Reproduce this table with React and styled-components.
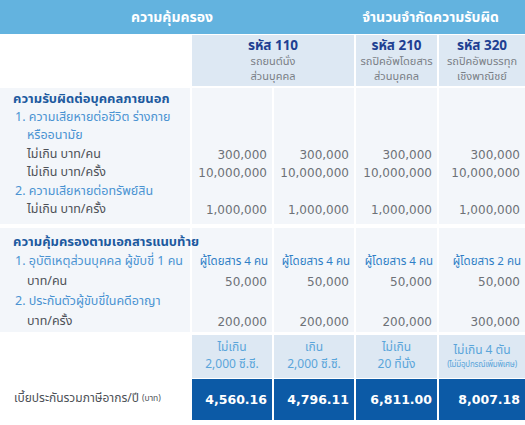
import React from 'react'
import styled, { createGlobalStyle } from 'styled-components'

const GlobalStyle = createGlobalStyle`
  html, body {
    margin: 0;
    padding: 0;
    background: #ffffff;
  }
  body {
    font-family: "Noto Sans Thai", "Tahoma", "DejaVu Sans", "Noto Sans", sans-serif;
  }
`

const Table = styled.div`
  width: 525px;
  display: grid;
  grid-template-columns: 190px 80px 80px 81px 86px;
  column-gap: 2px;
  background: #ffffff;
`

const TopBar = styled.div`
  grid-column: 1 / -1;
  height: 34px;
  background: #63b3df;
  display: flex;
  margin-bottom: 1px;
`

const TopTitle = styled.div`
  width: ${(p) => p.w}px;
  color: #ffffff;
  font-weight: 700;
  font-size: 14px;
  display: flex;
  align-items: center;
  justify-content: center;
  padding-right: ${(p) => p.shift || 0}px;
  box-sizing: border-box;
`

const CodeCell = styled.div`
  grid-column: ${(p) => p.span || 'auto'};
  background: ${(p) => (p.blank ? '#ffffff' : '#dde8f3')};
  height: 51px;
  display: flex;
  flex-direction: column;
  align-items: center;
  padding-top: 3px;
  box-sizing: border-box;
  margin-bottom: 2px;
`

const Code = styled.div`
  color: #203f92;
  font-weight: 700;
  font-size: 13.5px;
  line-height: 16px;
`

const CodeSub = styled.div`
  color: #7a7f86;
  font-size: 11px;
  line-height: 15px;
  white-space: nowrap;
`

const Section = styled.div`
  background: #f3f6fa;
  padding: ${(p) => p.pad};
  margin-bottom: ${(p) => p.gapAfter}px;
  box-sizing: border-box;
  position: relative;
  z-index: ${(p) => (p.left ? 1 : 0)};
`

const Line = styled.div`
  height: ${(p) => p.h}px;
  line-height: ${(p) => p.h}px;
  white-space: nowrap;
  font-size: 12.5px;
`

const Title = styled(Line)`
  padding-left: 13px;
  color: #1d5a9f;
  font-weight: 700;
  font-size: 13px;
`

const Item = styled(Line)`
  padding-left: ${(p) => (p.cont ? 27 : 15)}px;
  color: #4a93d2;
`

const Label = styled(Line)`
  padding-left: 27px;
  color: #4d5157;
`

const Value = styled(Line)`
  text-align: right;
  padding-right: 5px;
  color: #6d7177;
  font-family: "DejaVu Sans", sans-serif;
  font-size: 12px;
`

const Passenger = styled(Line)`
  text-align: right;
  padding-right: 4px;
  color: #2f7fc6;
  font-size: 11.5px;
`

const SubHead = styled.div`
  background: #dde8f3;
  height: 43px;
  display: flex;
  flex-direction: column;
  align-items: center;
  justify-content: center;
  color: #5aa5da;
  font-size: 12px;
  line-height: 17px;
  margin-top: 3px;
  white-space: nowrap;
`

const Tiny = styled.div`
  font-size: 8px;
  line-height: 12px;
  letter-spacing: -0.2px;
`

const BlankCell = styled.div`
  background: #ffffff;
`

const TotalLabel = styled.div`
  height: 41px;
  display: flex;
  align-items: center;
  padding-left: 14px;
  color: #4d5157;
  font-size: 12px;
  white-space: nowrap;
  small {
    font-size: 8.5px;
    margin-left: 3px;
  }
`

const Total = styled.div`
  background: #0c5aa6;
  height: 41px;
  margin-top: 1px;
  display: flex;
  align-items: center;
  justify-content: flex-end;
  padding-right: 5px;
  color: #ffffff;
  font-family: "DejaVu Sans", sans-serif;
  font-weight: 700;
  font-size: 12.5px;
`

const s1Rows = [
  { kind: 'title', text: 'ความรับผิดต่อบุคคลภายนอก' },
  { kind: 'item', text: '1. ความเสียหายต่อชีวิต ร่างกาย' },
  { kind: 'item', cont: true, text: 'หรืออนามัย' },
  { kind: 'label', text: 'ไม่เกิน บาท/คน', v: ['300,000', '300,000', '300,000', '300,000'] },
  { kind: 'label', text: 'ไม่เกิน บาท/ครั้ง', v: ['10,000,000', '10,000,000', '10,000,000', '10,000,000'] },
  { kind: 'item', text: '2. ความเสียหายต่อทรัพย์สิน' },
  { kind: 'label', text: 'ไม่เกิน บาท/ครั้ง', v: ['1,000,000', '1,000,000', '1,000,000', '1,000,000'] },
]

const s2Rows = [
  { kind: 'title', text: 'ความคุ้มครองตามเอกสารแนบท้าย' },
  { kind: 'item', text: '1. อุบัติเหตุส่วนบุคคล ผู้ขับขี่ 1 คน', p: ['ผู้โดยสาร 4 คน', 'ผู้โดยสาร 4 คน', 'ผู้โดยสาร 4 คน', 'ผู้โดยสาร 2 คน'] },
  { kind: 'label', text: 'บาท/คน', v: ['50,000', '50,000', '50,000', '50,000'] },
  { kind: 'item', text: '2. ประกันตัวผู้ขับขี่ในคดีอาญา' },
  { kind: 'label', text: 'บาท/ครั้ง', v: ['200,000', '200,000', '200,000', '300,000'] },
]

const LeftLine = ({ row, h }) => {
  if (row.kind === 'title') return <Title h={h}>{row.text}</Title>
  if (row.kind === 'item') return <Item h={h} cont={row.cont}>{row.text}</Item>
  return <Label h={h}>{row.text}</Label>
}

const Block = ({ rows, h, pad, gapAfter }) => (
  <>
    <Section left pad={pad} gapAfter={gapAfter}>
      {rows.map((r, i) => (
        <LeftLine key={i} row={r} h={h} />
      ))}
    </Section>
    {[0, 1, 2, 3].map((c) => (
      <Section key={c} pad={pad} gapAfter={gapAfter}>
        {rows.map((r, i) =>
          r.p ? (
            <Passenger key={i} h={h}>{r.p[c]}</Passenger>
          ) : (
            <Value key={i} h={h}>{r.v ? r.v[c] : ''}</Value>
          )
        )}
      </Section>
    ))}
  </>
)

const totals = ['4,560.16', '4,796.11', '6,811.00', '8,007.18']

export default function App() {
  return (
    <>
      <GlobalStyle />
      <Table>
        <TopBar>
          <TopTitle w={354} shift={10}>ความคุ้มครอง</TopTitle>
          <TopTitle w={171} shift={18}>จำนวนจำกัดความรับผิด</TopTitle>
        </TopBar>

        <CodeCell blank />
        <CodeCell span="2 / 4">
          <Code>รหัส 110</Code>
          <CodeSub>รถยนต์นั่ง</CodeSub>
          <CodeSub>ส่วนบุคคล</CodeSub>
        </CodeCell>
        <CodeCell>
          <Code>รหัส 210</Code>
          <CodeSub>รถปิคอัพโดยสาร</CodeSub>
          <CodeSub>ส่วนบุคคล</CodeSub>
        </CodeCell>
        <CodeCell>
          <Code>รหัส 320</Code>
          <CodeSub>รถปิคอัพบรรทุก</CodeSub>
          <CodeSub>เชิงพาณิชย์</CodeSub>
        </CodeCell>

        <Block rows={s1Rows} h={18.5} pad="2px 0 4px" gapAfter={4} />
        <Block rows={s2Rows} h={20} pad="4px 0 0" gapAfter={0} />

        <BlankCell />
        <SubHead>
          <div>ไม่เกิน</div>
          <div>2,000 ซี.ซี.</div>
        </SubHead>
        <SubHead>
          <div>เกิน</div>
          <div>2,000 ซี.ซี.</div>
        </SubHead>
        <SubHead>
          <div>ไม่เกิน</div>
          <div>20 ที่นั่ง</div>
        </SubHead>
        <SubHead>
          <div>ไม่เกิน 4 ตัน</div>
          <Tiny>(ไม่มีอุปกรณ์เพิ่มพิเศษ)</Tiny>
        </SubHead>

        <TotalLabel>
          เบี้ยประกันรวมภาษีอากร/ปี<small>(บาท)</small>
        </TotalLabel>
        {totals.map((t) => (
          <Total key={t}>{t}</Total>
        ))}
      </Table>
    </>
  )
}
